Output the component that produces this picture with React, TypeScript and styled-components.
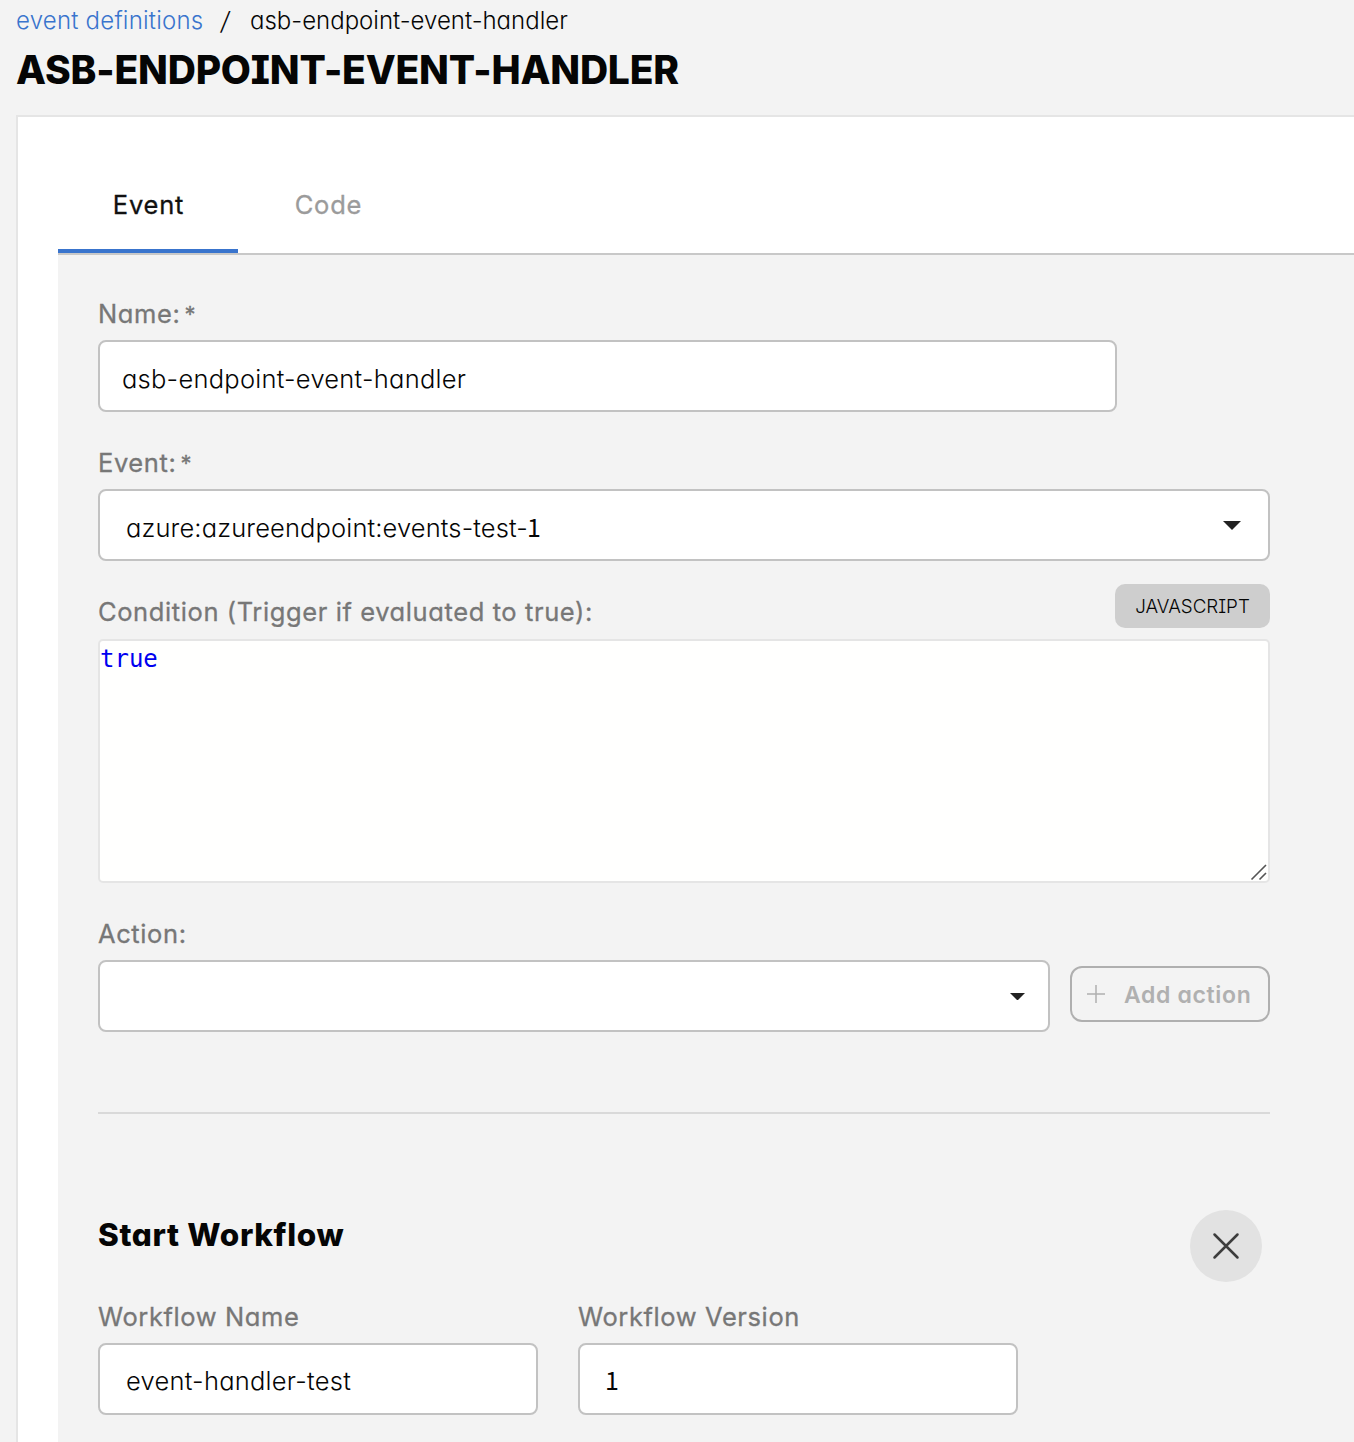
import React from 'react';
import styled, { createGlobalStyle } from 'styled-components';

const GlobalStyle = createGlobalStyle`
  *, *::before, *::after { box-sizing: border-box; }
  html, body { margin: 0; overflow: hidden; background: #f3f3f3; }
  body {
    color: #050505;
    font-family: Inter, "Liberation Sans", sans-serif;
    font-feature-settings: "cv11", "cv08", "calt" 0;
    -webkit-font-smoothing: antialiased;
  }
`;

const Page = styled.main`
  height: 1442px;
  padding-left: 16px;
  overflow: hidden;
`;

const Breadcrumb = styled.nav`
  display: flex;
  height: 40px;
  padding-top: 1px;
  font-size: 24px;
  font-weight: 300;
  line-height: 40px;
  white-space: pre;
`;

const CrumbLink = styled.a`
  width: 205px;
  color: #3974cd;
  letter-spacing: 0.22px;
`;

const Separator = styled.span`
  width: 29px;
  font-size: 25px;
  transform: skewX(-8deg);
`;

const Title = styled.h1`
  margin: 0;
  font-size: 39px;
  font-weight: 800;
  line-height: 60px;
  letter-spacing: -0.2px;
  white-space: nowrap;
`;

const Card = styled.section`
  width: 1400px;
  height: 1400px;
  margin-top: 15px;
  padding: 40px 0 0 40px;
  border: 2px solid #e5e5e5;
  background: #fff;
`;

const Tabs = styled.div`
  display: flex;
  height: 98px;
  border-bottom: 2px solid #c8c8c8;
`;

const Tab = styled.button<{ $active?: boolean }>`
  width: 180px;
  height: 96px;
  padding: 0 0 0 1px;
  border: 0;
  background: none;
  box-shadow: ${(p) => (p.$active ? 'inset 0 -4px 0 #3974cd' : 'none')};
  color: ${(p) => (p.$active ? '#111' : '#9b9b9b')};
  font: 400 25.5px/96px Inter, sans-serif;
  font-feature-settings: inherit;
  letter-spacing: 0.8px;
  -webkit-text-stroke: 0.3px currentColor;
`;

const Panel = styled.div`
  height: 1300px;
  padding: 39px 0 0 40px;
  background: #f3f3f3;
`;

const Form = styled.form`
  width: 1172px;
`;

const Field = styled.div<{ $width?: number }>`
  width: ${(p) => (p.$width ? `${p.$width}px` : 'auto')};
  margin-bottom: 31px;
`;

const Label = styled.label`
  display: flex;
  gap: 4px;
  height: 40px;
  margin-bottom: 6px;
  color: #777;
  font-size: 25.5px;
  font-weight: 400;
  line-height: 40px;
  letter-spacing: 0.6px;
  white-space: nowrap;
  -webkit-text-stroke: 0.3px currentColor;
`;

const Required = styled.span`
  font-size: 22px;
`;

const LabelRow = styled.div`
  display: flex;
  align-items: flex-start;
  justify-content: space-between;
  height: 55px;
  margin-top: -8px;
  ${Label} { margin-top: 8px; }
`;

const Control = styled.div<{ $inset?: number; $drop?: number; $tracking?: number }>`
  display: flex;
  align-items: center;
  flex: 1;
  height: 72px;
  padding: ${(p) => p.$drop ?? 4}px 28px 0 ${(p) => p.$inset ?? 26}px;
  border: 2px solid #c2c2c2;
  border-radius: 8px;
  background: #fff;
  font-size: 25.5px;
  font-weight: 300;
  letter-spacing: ${(p) => p.$tracking ?? 0.25}px;
`;

const Digit = styled.span`
  margin: -2px 0 0 -1px;
  font-family: "Noto Sans CJK JP", Lato, sans-serif;
  font-size: 25px;
  font-weight: 400;
  line-height: 30px;
`;

const Arrow = styled.svg<{ $size: number }>`
  width: ${(p) => p.$size}px;
  height: ${(p) => p.$size / 2}px;
  margin: ${(p) => (p.$size > 16 ? -4 : -3)}px ${(p) => (p.$size > 16 ? -1 : -5)}px 0 auto;
  fill: #222;
`;

const Language = styled.span`
  width: 155px;
  height: 44px;
  border-radius: 10px;
  background: #cecece;
  font-size: 18.8px;
  font-weight: 300;
  line-height: 46px;
  text-align: center;
`;

const Editor = styled.div`
  display: flex;
  align-items: flex-end;
  justify-content: space-between;
  height: 244px;
  margin-bottom: 31px;
  border: 2px solid #e5e5e5;
  border-radius: 5px;
  background: #fffffe;
`;

const Code = styled.code`
  align-self: flex-start;
  color: #0000f0;
  font: 24px/36px "DejaVu Sans Mono", monospace;
`;

const ActionRow = styled.div`
  display: flex;
  align-items: center;
  gap: 20px;
`;

const AddButton = styled.button`
  display: flex;
  align-items: center;
  gap: 19px;
  width: 200px;
  height: 56px;
  margin-top: -4px;
  padding: 0 0 0 15px;
  border: 2px solid #afafaf;
  border-radius: 12px;
  background: transparent;
  color: #b0b0b0;
  font: 600 23px/52px Inter, sans-serif;
  font-feature-settings: inherit;
  letter-spacing: 0.65px;
  white-space: nowrap;
`;

const ButtonText = styled.span`
  padding-top: 1px;
`;

const Divider = styled.hr`
  height: 2px;
  margin: 80px 0 96px;
  border: 0;
  background: #d9d9d9;
`;

const SectionHeader = styled.header`
  display: flex;
  justify-content: space-between;
  height: 72px;
  margin-bottom: 15px;
  padding-right: 8px;
`;

const SectionTitle = styled.h2`
  margin: 0;
  font-size: 31.5px;
  font-weight: 800;
  line-height: 49px;
  letter-spacing: 0.65px;
`;

const CloseButton = styled.button`
  display: grid;
  place-items: center;
  width: 72px;
  height: 72px;
  padding: 0;
  border: 0;
  border-radius: 50%;
  background: #e2e2e2;
`;

const FieldRow = styled.div`
  display: flex;
  gap: 40px;
`;

const DropArrow = ({ size }: { size: number }) => (
  <Arrow $size={size} viewBox="0 0 18 9"><path d="M0 0h18L9 9z" /></Arrow>
);

export default function App() {
  return (
    <Page>
      <GlobalStyle />
      <Breadcrumb>
        <CrumbLink>event definitions</CrumbLink>
        <Separator>/</Separator>
        <span>asb-endpoint-event-handler</span>
      </Breadcrumb>
      <Title>ASB-ENDPOINT-EVENT-HANDLER</Title>
      <Card>
        <Tabs>
          <Tab $active>Event</Tab>
          <Tab>Code</Tab>
        </Tabs>
        <Panel>
          <Form>
            <Field $width={1019}>
              <Label>Name:<Required>*</Required></Label>
              <Control $inset={22}>asb-endpoint-event-handler</Control>
            </Field>
            <Field>
              <Label>Event:<Required>*</Required></Label>
              <Control $tracking={0.13}>azure:azureendpoint:events-test-<Digit>1</Digit><DropArrow size={18} /></Control>
            </Field>
            <LabelRow>
              <Label>Condition (Trigger if evaluated to true):</Label>
              <Language>JAVASCRIPT</Language>
            </LabelRow>
            <Editor>
              <Code>true</Code>
              <svg width="18" height="18" viewBox="0 0 18 18" fill="none" stroke="#555" strokeWidth="1.6">
                <path d="M1.5 16.5 16 2M9.5 16.5 16 10" />
              </svg>
            </Editor>
            <Label>Action:</Label>
            <ActionRow>
              <Control><DropArrow size={15} /></Control>
              <AddButton type="button" disabled>
                <svg width="18" height="18" viewBox="0 0 18 18" fill="none" stroke="#b0b0b0" strokeWidth="1.5">
                  <path d="M9 0v18M0 9h18" />
                </svg>
                <ButtonText>Add action</ButtonText>
              </AddButton>
            </ActionRow>
            <Divider />
            <SectionHeader>
              <SectionTitle>Start Workflow</SectionTitle>
              <CloseButton type="button" aria-label="Close">
                <svg width="28" height="28" viewBox="0 0 28 28" fill="none" stroke="#3d3d3d" strokeWidth="2.5" strokeLinecap="round">
                  <path d="m2.5 2.5 23 23m0-23-23 23" />
                </svg>
              </CloseButton>
            </SectionHeader>
            <FieldRow>
              <Field $width={440}>
                <Label>Workflow Name</Label>
                <Control $drop={2}>event-handler-test</Control>
              </Field>
              <Field $width={440}>
                <Label>Workflow Version</Label>
                <Control $drop={2}><Digit>1</Digit></Control>
              </Field>
            </FieldRow>
          </Form>
        </Panel>
      </Card>
    </Page>
  );
}
